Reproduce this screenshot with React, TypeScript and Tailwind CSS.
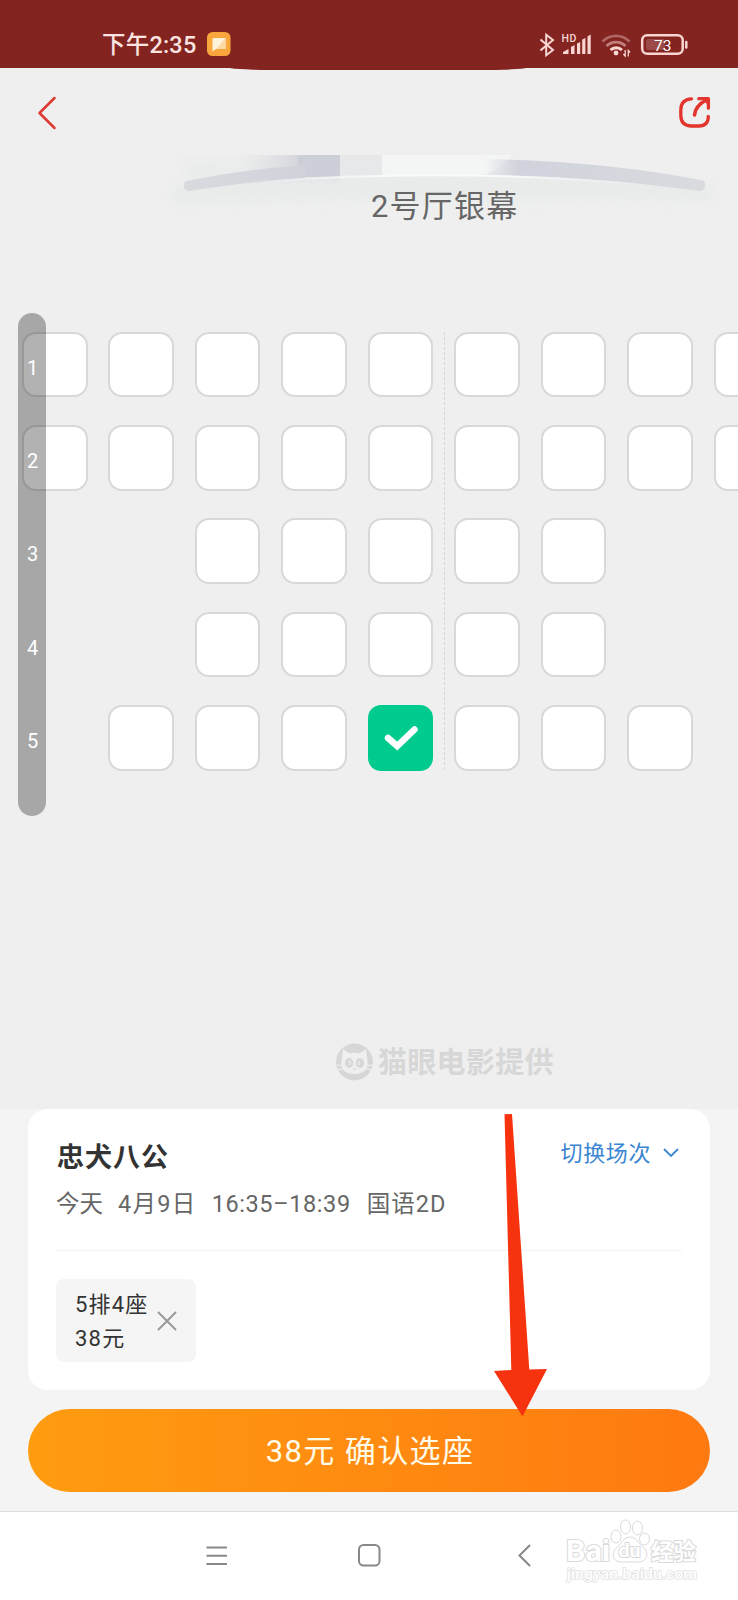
import React from "react";

const rows = [
  { id: 1, seats: [1, 1, 1, 1, 1, 1, 1, 1, 1] },
  { id: 2, seats: [1, 1, 1, 1, 1, 1, 1, 1, 1] },
  { id: 3, seats: [0, 0, 1, 1, 1, 1, 1, 0, 0] },
  { id: 4, seats: [0, 0, 1, 1, 1, 1, 1, 0, 0] },
  { id: 5, seats: [0, 1, 1, 1, 2, 1, 1, 1, 0] },
];

const StatusBar = () => (
  <div className="relative flex h-[68px] items-start justify-between bg-[#832421] pl-[102px] pr-[50px] pt-8">
    <div className="flex h-6 items-center gap-[11px]">
      <span className="translate-y-px whitespace-nowrap text-[23.5px] font-medium leading-6 tracking-[0.2px] text-[#fbe3e0]">
        下午2:35
      </span>
      <svg width="24" height="24" viewBox="0 0 24 24">
        <rect width="23.5" height="24" rx="5.5" fill="#f9a63c" />
        <path d="M6.500 6h12v11h-9.500l-3.500 2.500V7q0-1 1-1z" fill="#fff3dc" />
        <path d="M18.500 6v11h-9z" fill="#fbd9a4" />
      </svg>
    </div>
    <svg width="148" height="26" viewBox="540 31 148 26" fill="none">
      <path
        d="M540.500 38.500l12.500 10.500-6.800 5.200V33.800l6.800 5.200-12.500 10.500"
        stroke="#f8d5d1"
        strokeWidth="2"
      />
      <text x="561.500" y="40.500" fontSize="10.500" fontWeight="500" fill="#f8d5d1" letterSpacing="0.600">
        HD
      </text>
      <path
        d="M563 53v-2l5.500-3v5zM571 53v-7l3.500-2v9zM577 53V42.500l3.200-1.500v12zM582.200 53V38.500l3.200-1.500v16zM587.500 53V35.500l3.200-2V53z"
        fill="#f8d5d1"
      />
      <path d="M602.500 40.500a19 19 0 0 1 27 0" stroke="#b06663" strokeWidth="2.800" />
      <path d="M606.500 45a13.500 13.500 0 0 1 19 0" stroke="#c07f7c" strokeWidth="2.800" />
      <path d="M610.500 49a8.500 8.500 0 0 1 11.500 0" stroke="#f8d5d1" strokeWidth="3" />
      <circle cx="616" cy="52" r="2.400" fill="#f8d5d1" />
      <path d="M625.200 49v6l-1.800-2M628.300 55.500v-6l1.800 2" stroke="#f8d5d1" strokeWidth="1.300" />
      <rect x="642.200" y="34.200" width="40.500" height="18.600" rx="5" stroke="#f8d5d1" strokeWidth="2.500" />
      <rect x="646" y="38" width="19" height="11" rx="2" fill="#9c4a47" />
      <path d="M686.300 41v5.500" stroke="#f8d5d1" strokeWidth="2.500" strokeLinecap="round" />
      <text x="654" y="49.500" fontSize="15.500" fill="#fff">
        73
      </text>
    </svg>
    <div className="absolute left-[228px] top-[67px] h-[3px] w-[300px] rounded-b-[40px_3px] bg-[#832421]" />
  </div>
);

const Header = () => (
  <header className="flex h-[87px] items-center justify-between pl-[36px] pr-[26px]">
    <button>
      <svg width="22" height="36" viewBox="0 0 22 36" fill="none">
        <path d="M18.500 4L3.500 19l15 15" stroke="#de3a33" strokeWidth="2.500" strokeLinecap="round" strokeLinejoin="round" />
      </svg>
    </button>
    <button>
      <svg width="34" height="34" viewBox="678 95 34 34" fill="none" strokeLinecap="round" strokeLinejoin="round">
        <path
          d="M691.500 98.800c-7 .4-10.700 4.200-10.700 11.200v5c0 7.500 3.700 11 10.700 11h7.500c6.500 0 9.300-3 9.300-9.500"
          stroke="#e3352e"
          strokeWidth="3.300"
        />
        <path d="M694.500 115c.5-6.500 4-11 12.500-15.500" stroke="#e3352e" strokeWidth="3.500" />
        <path d="M698.800 98.700h9.600v9.500" stroke="#e3352e" strokeWidth="3.300" />
        <path d="M702 99h6.400v6.500z" fill="#e3352e" />
      </svg>
    </button>
  </header>
);

const Screen = () => (
  <div className="relative h-[176.700px]">
    <svg width="738" height="70" viewBox="0 155 738 70" fill="none" className="block">
      <defs>
        <linearGradient id="beamLeft" x1="240" x2="310" y1="0" y2="0" gradientUnits="userSpaceOnUse">
          <stop offset="0" stopColor="#d8dade" stopOpacity="0" />
          <stop offset="1" stopColor="#cdd0d8" />
        </linearGradient>
        <linearGradient id="arcLeft" x1="186" x2="305" y1="0" y2="0" gradientUnits="userSpaceOnUse">
          <stop offset="0" stopColor="#d8dade" />
          <stop offset="1" stopColor="#cfd2da" />
        </linearGradient>
        <linearGradient id="arcRight" x1="485" x2="705" y1="0" y2="0" gradientUnits="userSpaceOnUse">
          <stop offset="0" stopColor="#d2d5de" stopOpacity="0" />
          <stop offset="0.150" stopColor="#d0d3dc" />
          <stop offset="1" stopColor="#dadbdf" />
        </linearGradient>
        <linearGradient id="arcLine" x1="230" x2="650" y1="0" y2="0" gradientUnits="userSpaceOnUse">
          <stop offset="0" stopColor="#f7f8f8" stopOpacity="0" />
          <stop offset="0.400" stopColor="#f9fafa" />
          <stop offset="0.650" stopColor="#f9fafa" />
          <stop offset="1" stopColor="#f7f8f8" stopOpacity="0" />
        </linearGradient>
        <linearGradient id="glow" x1="0" x2="0" y1="175" y2="192" gradientUnits="userSpaceOnUse">
          <stop offset="0" stopColor="#e0e2e6" />
          <stop offset="1" stopColor="#ececed" stopOpacity="0" />
        </linearGradient>
        <filter id="soft" x="-20%" y="-50%" width="140%" height="200%">
          <feGaussianBlur stdDeviation="6" />
        </filter>
        <filter id="edge" x="-5%" y="-50%" width="110%" height="200%">
          <feGaussianBlur stdDeviation="0.700" />
        </filter>
      </defs>
      <path d="M172 184Q445 160 714 184v18Q445 198 172 204z" fill="#e9ebeb" filter="url(#soft)" />
      <path d="M180 160h80l60 12-130 10z" fill="#eaebeb" filter="url(#soft)" />
      <path d="M240 155h100v21q-50 0-100 5z" fill="url(#beamLeft)" />
      <path d="M340 155h42v20h-42z" fill="#e7e8e9" />
      <path d="M382 155h130q-12 18-34 20H382z" fill="#f4f6f6" filter="url(#edge)" />
      <path d="M298 155h42v22h-42z" fill="#cccfd8" />
      <path d="M255 183q40-6 85-7v16H255z" fill="url(#glow)" />
      <path
        d="M186 181Q245 169 305 165v13Q240 183 189 191q-6-1-5-6 0-3 2-4z"
        fill="url(#arcLeft)"
        filter="url(#edge)"
      />
      <path
        d="M485 159q120 2 218 21.500 3 2 2 6-1 4-5 4.500-110-15-225-16z"
        fill="url(#arcRight)"
        filter="url(#edge)"
      />
      <path d="M230 184Q445 166 650 185" stroke="url(#arcLine)" strokeWidth="2" filter="url(#edge)" />
    </svg>
    <p className="absolute left-[371px] top-[34px] whitespace-nowrap text-[31px] leading-9 tracking-[1.200px] text-[#666]">
      2号厅银幕
    </p>
  </div>
);

const Seat = ({ state }: { state: number }) => {
  if (state === 0) return <span />;
  if (state === 2) {
    return (
      <button className="rounded-[13px] bg-[#00cb8f]">
        <svg width="66" height="66" viewBox="0 0 66 66" fill="none">
          <path d="M20 33l9.200 8 17.300-16.500" stroke="#fff" strokeWidth="6.500" strokeLinecap="round" />
        </svg>
      </button>
    );
  }
  return <button className="rounded-[14px] border-2 border-[#d8d8d8] bg-white" />;
};

const SeatMap = () => (
  <div className="relative h-[704.300px] overflow-hidden">
    <div className="flex flex-col gap-[27.700px] pl-[22px]">
      {rows.map((row) => (
        <div key={row.id} className="grid h-[65.600px] grid-cols-[repeat(9,65.600px)] gap-x-[20.850px]">
          {row.seats.map((state, i) => (
            <Seat key={i} state={state} />
          ))}
        </div>
      ))}
    </div>
    <div className="absolute left-[444px] top-0 h-[440px] w-px bg-[repeating-linear-gradient(to_bottom,#d6d6d6_0_3px,transparent_3px_5px)]" />
  </div>
);

const RowRail = () => (
  <div className="absolute left-[18px] top-[313px] flex h-[503px] w-7 flex-col items-center rounded-full bg-black/30 pl-px pt-[8px] text-xl text-white">
    {rows.map((row) => (
      <span key={row.id} className="flex h-[93.300px] items-center">
        {row.id}
      </span>
    ))}
  </div>
);

const Provider = () => (
  <div className="flex h-[73px] items-start gap-[5px] pl-[336px] pt-[7px] text-[#d7d7d7]">
    <svg width="37" height="38" viewBox="0 0 37 38">
      <circle cx="18.500" cy="19" r="18.500" fill="currentColor" />
      <path
        d="M7 6l6.500 4.500q5-1.500 10 0L30 6l1.500 12c1.500 9-4.500 13-13 13s-14.500-4-13-13z"
        fill="#efefef"
      />
      <ellipse cx="13" cy="20" rx="4.200" ry="5" fill="currentColor" />
      <ellipse cx="24" cy="20" rx="4.200" ry="5" fill="currentColor" />
      <path d="M14 18v4M23 18v4" stroke="#efefef" strokeWidth="1.300" />
      <path d="M16.500 25.500h4l-2 2z" fill="currentColor" />
      <path d="M0 22l6 .5M1 27.500l6-2M37 22l-6 .5M36 27.500l-6-2" stroke="#efefef" strokeWidth="1.200" />
    </svg>
    <span className="translate-y-0.5 whitespace-nowrap text-[29px] font-bold leading-9 tracking-[0.300px]">
      猫眼电影提供
    </span>
  </div>
);

const Session = () => (
  <section className="h-[281px] rounded-[20px] bg-white px-7">
    <div className="flex h-[142px] flex-col border-b border-[#f3f3f3] pt-[29px]">
      <div className="flex h-10 items-center justify-between">
        <h1 className="pl-px text-[27px] font-bold leading-10 tracking-[1px] text-[#333]">忠犬八公</h1>
        <button className="flex -translate-y-[5px] items-center gap-3 pr-[3px] text-[22px] tracking-[0.600px] text-[#3b86d2]">
          切换场次
          <svg width="16" height="10" viewBox="0 0 16 10" fill="none">
            <path d="M1 1l7 7 7-7" stroke="currentColor" strokeWidth="1.800" />
          </svg>
        </button>
      </div>
      <div className="mt-[9px] flex h-9 items-center gap-4 whitespace-nowrap text-[23.500px] text-[#666]">
        <span>今天</span>
        <span className="-ml-px tracking-[1.300px]">4月9日</span>
        <span className="-ml-px tracking-[0.600px]">16:35–18:39</span>
        <span className="tracking-[1px]">国语2D</span>
      </div>
    </div>
    <div className="mt-7 flex h-[83px] w-[140px] items-center gap-[8px] rounded-lg bg-[#f5f5f5] pl-[19px]">
      <div className="translate-y-px whitespace-nowrap text-[22px] leading-[34px] tracking-[1.200px] text-[#333]">
        <p>5排4座</p>
        <p>38元</p>
      </div>
      <svg width="20" height="20" viewBox="0 0 20 20" fill="none">
        <path d="M1 1l18 18M19 1L1 19" stroke="#999" strokeWidth="2" />
      </svg>
    </div>
  </section>
);

const NavBar = () => (
  <nav className="relative flex h-[89px] items-center border-t border-[#dedede] bg-white pb-px pl-[206px]">
    <svg width="22" height="20" viewBox="0 0 22 20" stroke="#888" strokeWidth="1.900">
      <path d="M.5 1.500h20.500M.5 9.800h20.500M.5 18h20.500" />
    </svg>
    <svg width="23" height="23" viewBox="0 0 23 23" className="ml-[130px]" fill="none">
      <rect x="1" y="1" width="20.500" height="20.500" rx="4.500" stroke="#888" strokeWidth="2" />
    </svg>
    <svg width="13" height="23" viewBox="0 0 13 23" className="ml-[137px]" fill="none">
      <path d="M12 1L1.500 11.500 12 22" stroke="#888" strokeWidth="2" />
    </svg>
    <svg
      width="140"
      height="72"
      viewBox="564 1516 140 72"
      className="absolute left-[564px] top-[4px]"
      fill="#fff"
      stroke="#dadada"
      strokeWidth="1"
    >
      <text x="566" y="1561" fontSize="30" fontWeight="700" strokeWidth="2" paintOrder="stroke" textLength="44" lengthAdjust="spacingAndGlyphs">
        Bai
      </text>
      <ellipse cx="616" cy="1536.500" rx="5" ry="6.500" />
      <ellipse cx="625.500" cy="1527" rx="5" ry="7" />
      <ellipse cx="637.500" cy="1528" rx="5" ry="7" />
      <ellipse cx="644.500" cy="1539" rx="5" ry="6" />
      <path d="M630 1537c6 0 8 6 13 10 7 6 4 15-5 15h-17c-9 0-10-9-4-15 5-4 7-10 13-10z" />
      <text x="618.500" y="1557" fontSize="19" fontWeight="700" strokeWidth="2" paintOrder="stroke" textLength="22" lengthAdjust="spacingAndGlyphs">
        du
      </text>
      <text x="651" y="1560" fontSize="22.500" fontWeight="700" strokeWidth="2" paintOrder="stroke" textLength="45">
        经验
      </text>
      <text x="567" y="1579" fontSize="15.500" fontWeight="500" stroke="#e2e2e2" strokeWidth="1.600" paintOrder="stroke" textLength="130">
        jingyan.baidu.com
      </text>
    </svg>
  </nav>
);

const App = () => {
  return (
    <div className="relative flex h-[1600px] w-[738px] flex-col overflow-hidden bg-[#efefef] font-['Roboto','Noto_Sans_CJK_SC',sans-serif]">
      <StatusBar />
      <Header />
      <main className="flex h-[954px] flex-col">
        <Screen />
        <SeatMap />
        <Provider />
      </main>
      <RowRail />
      <div className="flex h-[402px] flex-col gap-[19px] bg-[#f4f4f4] px-7">
        <Session />
        <button className="h-[83px] rounded-full bg-linear-to-r from-[#ff9c10] to-[#ff7911] pl-0.5 pt-1 text-[31px] tracking-[1.400px] text-[#fffbe9]">
          38元 确认选座
        </button>
      </div>
      <NavBar />
      <svg width="56" height="305" viewBox="493 1113 56 305" className="absolute left-[493px] top-[1113px]">
        <path d="M504.500 1114.300l7.500-.3 17.300 255.500 17.700-.5-24.500 47.500-28.500-45.500 17.300-1z" fill="#f7330f" />
      </svg>
    </div>
  );
};

export default App;
